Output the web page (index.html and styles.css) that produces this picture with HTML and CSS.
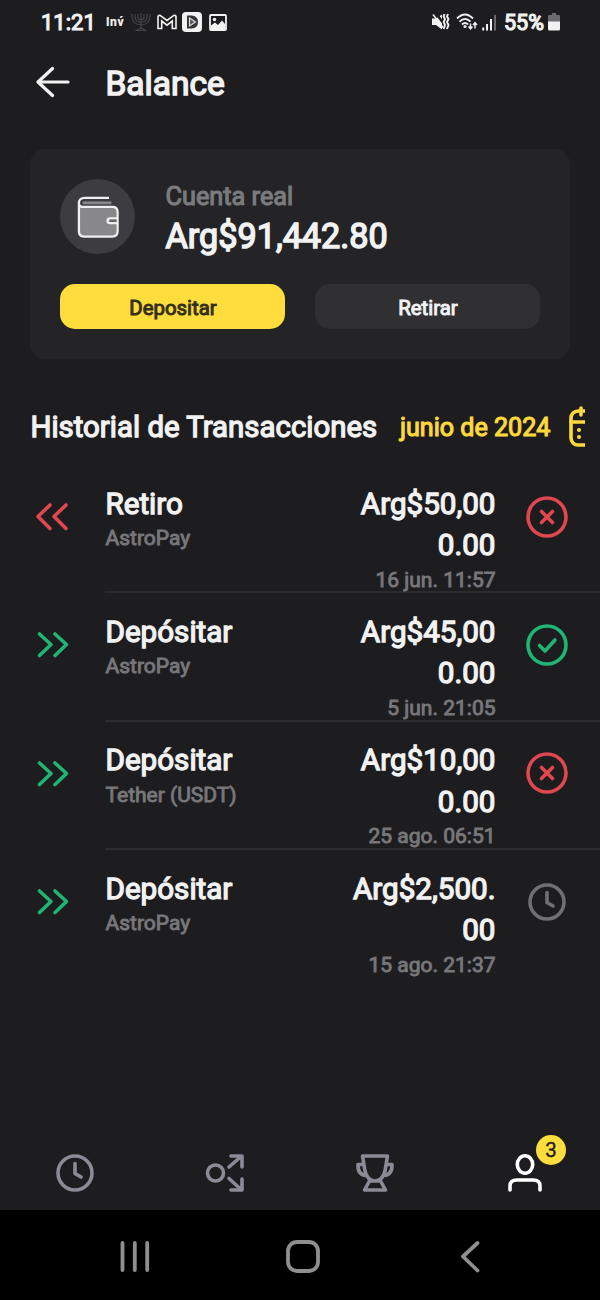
FILE: index.html
```
<!DOCTYPE html>
<html lang="es">
<head>
    <meta charset="UTF-8">
    <meta name="viewport" content="width=device-width, initial-scale=1.0">
    <title>Balance</title>
    <link rel="stylesheet" href="styles.css">
</head>
<body>
    <!-- shared icons -->
    <svg class="sprite">
        <symbol id="in" viewBox="0 0 36 30">
            <path d="M4.5 4 L16 14.5 L4.5 25.5 M20 4 L31.5 14.5 L20 25.5"/>
        </symbol>
        <symbol id="failed" viewBox="0 0 44 44">
            <circle cx="22" cy="22" r="19"/>
            <path d="M16.5 16.5 L27.5 27.5 M27.5 16.5 L16.5 27.5"/>
        </symbol>
        <symbol id="clock" viewBox="0 0 44 44">
            <circle cx="22" cy="22" r="17"/>
            <path d="M22 12.5 V22.5 L28 26"/>
        </symbol>
    </svg>

    <div class="status-bar">
        <span class="time">11:21</span>
        <span class="inv">Inv&#769;</span>
        <svg class="menorah" width="20" height="20" viewBox="0 0 20 20">
            <path d="M10 1 V17 M1 2 V5 A9 8 0 0 0 19 5 V2 M4 2 V5 A6 5.5 0 0 0 16 5 V2 M7 2 V5 A3 3 0 0 0 13 5 V2 M5.500 18.500 H14.500 L10 16 Z"/>
        </svg>
        <svg class="mail" width="20" height="16" viewBox="0 0 20 16">
            <path d="M1 14.500 V2.500 Q1.500 .8 3.500 1.600 L10 6.500 L16.500 1.600 Q18.500 .8 19 2.500 V14.500 H15.300 V7 L10 11.200 L4.700 7 V14.500 Z"/>
        </svg>
        <svg class="play" width="20" height="20" viewBox="0 0 20 20">
            <rect width="20" height="20" rx="4" fill="#f2f2f2"/>
            <path d="M5 3.500 H9.500 Q16 4 16 10 T9.500 16.500 H5 Z" fill="#353537"/>
            <path d="M7.500 6 L13.500 10 L7.500 14 Z" fill="#57575a" stroke="#ddd" stroke-width="1.200"/>
        </svg>
        <svg class="photo" width="18" height="17" viewBox="0 0 18 17">
            <rect x="1" y="1" width="16" height="15" rx="1" fill="none" stroke="#f2f2f2" stroke-width="1.800"/>
            <circle cx="5.500" cy="5.500" r="1.700" fill="#f2f2f2"/>
            <path d="M2 15 V11.500 L6 8.500 L9 11 L13 6.500 L16 10 V15 Z" fill="#f2f2f2"/>
        </svg>
        <div class="status-right">
            <svg width="18" height="18" viewBox="0 0 18 18" fill="none" stroke="#f2f2f2">
                <path d="M0 5.500 H4 L10 1.500 V16.500 L4 12 H0 Z" fill="#f2f2f2" stroke="none"/>
                <path d="M3 -1 L12 11" stroke="#1d1d1f" stroke-width="2.500"/>
                <path d="M1 1.500 L11 14.500" stroke-width="1.500"/>
                <path d="M12.500 1 L11.700 3.500 L13 6 L11.700 9 L13 12 L11.700 16 M16 1 L15 3.500 L16.500 6 L15 9 L16.500 12 L15 16" stroke-width="1.900"/>
            </svg>
            <svg class="wifi" width="22" height="18" viewBox="0 0 22 18" fill="none" stroke="#f2f2f2" stroke-width="1.900">
                <path d="M1 5.500 Q9 -2.500 17 5.500 M3.500 8.700 Q9 3 14.500 8.700 M6 11.500 Q9 8.500 12 11.500"/>
                <circle cx="9" cy="13.500" r="1.500" fill="#f2f2f2" stroke="none"/>
                <path d="M14.500 10.500 V15.500 M12.500 13.500 L14.500 15.800 L16.500 13.500 M19 15.500 V10 M17 12 L19 9.700 L21 12" stroke-width="1.500"/>
            </svg>
            <svg class="signal" width="14" height="17" viewBox="0 0 14 17">
                <path d="M1.200 13.500 V16.500 M5 10 V16.500 M9 5 V16.500" stroke="#f2f2f2" stroke-width="2"/>
                <path d="M13 1 V16.500" stroke="#77777a" stroke-width="1.700"/>
            </svg>
            <span class="percent">55%</span>
            <svg class="battery" width="12" height="18" viewBox="0 0 12 18">
                <path d="M4 0 H8 V2 H11 Q12 2 12 3 V9 H0 V3 Q0 2 1 2 H4 Z" fill="#6b6b6d"/>
                <path d="M0 8.500 H12 V16 Q12 17.500 10.500 17.500 H1.500 Q0 17.500 0 16 Z" fill="#f2f2f2"/>
            </svg>
        </div>
    </div>

    <div class="header">
        <svg class="back" width="34" height="32" viewBox="0 0 34 32">
            <path d="M32 16 H2.500 M16.500 2.500 L2 16 L16.500 29.500"/>
        </svg>
        <h1>Balance</h1>
    </div>

    <div class="card">
        <div class="account">
            <div class="wallet">
                <svg width="42" height="42" viewBox="0 0 44 44">
                    <path d="M4 11 H37 Q41.500 12 41.500 16 V36 Q41.500 42 36.500 42 H7 Q2 42 2 36 V7 Z" fill="#88888a"/>
                    <path d="M4 3 H34 V10 H4 Z" fill="#3c3c41"/>
                    <path d="M6 7.200 H36" stroke="#88888a" stroke-width="3"/>
                    <path d="M33.500 2 H8 Q2 2 2 7.500 V37 Q2 42.500 7 42.500 H37 Q42.500 42.500 42.500 37 V16.500 Q42.500 11.500 37 11.500 H7 Q2 11.500 2 7.500 M42.500 23.500 H34.500 Q32 23.500 32 26 Q32 28.500 34.500 28.500 H42.500" fill="none" stroke="#f0f0f0" stroke-width="2.400"/>
                    <path d="M34.500 26 H41.300" stroke="#68686b" stroke-width="2.600"/>
                </svg>
            </div>
            <div>
                <div class="account-name">Cuenta real</div>
                <div class="account-sum">Arg$91,442.80</div>
            </div>
        </div>
        <div class="buttons">
            <button class="btn btn-primary">Depositar</button>
            <button class="btn">Retirar</button>
        </div>
    </div>

    <div class="history-header">
        <h2>Historial de Transacciones</h2>
        <span class="month">junio de 2024</span>
        <svg class="calendar" width="40" height="44" viewBox="0 0 40 44">
            <rect x="2" y="6" width="34" height="34" rx="7"/>
            <path d="M2 17 H36 M12 3 V10 M26.500 3 V10"/>
            <path d="M10 25 V25.100 M10 32 V32.100 M19 25 V25.100 M19 32 V32.100" stroke-width="4"/>
        </svg>
    </div>

    <div class="list">
        <div class="row">
            <svg class="direction red" width="36" height="30" viewBox="0 0 36 30">
                <path d="M15 3 L3 14.500 L15 26.500 M31 3 L19 14.500 L31 26.500"/>
            </svg>
            <div class="row-body">
                <div class="info">
                    <div class="name">Retiro</div>
                    <div class="method">AstroPay</div>
                </div>
                <div class="amount">
                    <div class="sum">Arg$50,000.00</div>
                    <div class="date">16 jun. 11:57</div>
                </div>
                <svg class="state red"><use href="#failed"/></svg>
            </div>
        </div>
        <div class="row">
            <svg class="direction green"><use href="#in"/></svg>
            <div class="row-body">
                <div class="info">
                    <div class="name">Depósitar</div>
                    <div class="method">AstroPay</div>
                </div>
                <div class="amount">
                    <div class="sum">Arg$45,000.00</div>
                    <div class="date">5 jun. 21:05</div>
                </div>
                <svg class="state green" viewBox="0 0 44 44">
                    <circle cx="22" cy="22" r="19"/>
                    <path d="M14.500 22.500 L20 28 L30 17"/>
                </svg>
            </div>
        </div>
        <div class="row">
            <svg class="direction green"><use href="#in"/></svg>
            <div class="row-body">
                <div class="info">
                    <div class="name">Depósitar</div>
                    <div class="method">Tether (USDT)</div>
                </div>
                <div class="amount">
                    <div class="sum">Arg$10,000.00</div>
                    <div class="date">25 ago. 06:51</div>
                </div>
                <svg class="state red"><use href="#failed"/></svg>
            </div>
        </div>
        <div class="row">
            <svg class="direction green"><use href="#in"/></svg>
            <div class="row-body">
                <div class="info">
                    <div class="name">Depósitar</div>
                    <div class="method">AstroPay</div>
                </div>
                <div class="amount">
                    <div class="sum">Arg$2,500.00</div>
                    <div class="date">15 ago. 21:37</div>
                </div>
                <svg class="state gray"><use href="#clock"/></svg>
            </div>
        </div>
    </div>

    <div class="tabs">
        <div class="tab">
            <svg><use href="#clock"/></svg>
        </div>
        <div class="tab">
            <svg viewBox="0 0 44 44">
                <circle cx="12.500" cy="22" r="8"/>
                <path d="M26 16 L38 5.500 M28 5 H39 V16 M26 27.500 L38 38.500 M28 39 H39 V28"/>
            </svg>
        </div>
        <div class="tab">
            <svg viewBox="0 0 44 44">
                <path d="M9.500 5 H34.500 L32 20 Q29.500 30 22 30 Q14.500 30 12 20 Z M11 13.500 H5 Q4.500 23.500 13 24.500 M33 13.500 H39 Q39.500 23.500 31 24.500 M16.500 30 H27.500 L32.500 39 H11.500 Z"/>
            </svg>
        </div>
        <div class="tab active">
            <svg viewBox="0 0 44 44">
                <ellipse cx="22" cy="13.500" rx="7.700" ry="8.700"/>
                <path d="M7 39 V35 Q7 29 14 29 H30 Q37 29 37 35 V39"/>
            </svg>
            <span class="badge">3</span>
        </div>
    </div>

    <div class="system-nav">
        <svg width="40" height="40" viewBox="0 0 40 40"><path d="M7.500 6 V33 M19.800 6 V33 M32.200 6 V33"/></svg>
        <svg width="40" height="40" viewBox="0 0 40 40"><rect x="5" y="5" width="30" height="29" rx="9"/></svg>
        <svg width="40" height="40" viewBox="0 0 40 40"><path d="M27.500 6 L13 19.500 L27.500 33.500"/></svg>
    </div>
</body>
</html>
```

FILE: styles.css
```
* {
    box-sizing: border-box;
}
body {
    margin: 0;
    width: 600px;
    height: 1300px;
    overflow: hidden;
    display: flex;
    flex-direction: column;
    background-color: #1d1d1f;
    color: #f2f2f2;
    font-family: Roboto, sans-serif;
    -webkit-text-stroke: 0.9px currentColor;
}
svg {
    display: block;
    flex: none;
}
.sprite {
    position: absolute;
    width: 0;
    height: 0;
}

/* phone status bar */
.status-bar {
    height: 44px;
    padding: 0 40px 0 41px;
    display: flex;
    align-items: center;
}
.time {
    width: 65px;
    font-size: 22px;
    -webkit-text-stroke-width: 1.1px;
}
.inv {
    width: 25px;
    font-size: 12px;
    font-weight: 700;
    letter-spacing: 0.6px;
    -webkit-text-stroke-width: 0.2px;
}
.menorah {
    fill: none;
    stroke: #454547;
    stroke-width: 1.2;
}
.mail {
    margin-left: 6px;
    fill: none;
    stroke: #f2f2f2;
    stroke-width: 1.6;
}
.play {
    margin-left: 5px;
}
.photo {
    margin-left: 7px;
}
.status-right {
    margin-left: auto;
    display: flex;
    align-items: center;
}
.wifi {
    margin-left: 6px;
}
.signal {
    margin-left: 4px;
}
.percent {
    margin-left: 8px;
    width: 44px;
    font-size: 21.5px;
    -webkit-text-stroke-width: 1.2px;
}

.header {
    height: 78px;
    padding-left: 35.5px;
    display: flex;
    align-items: center;
}
.back {
    margin-top: -2px;
    fill: none;
    stroke: #f2f2f2;
    stroke-width: 3.2;
    stroke-linecap: round;
    stroke-linejoin: round;
}
h1 {
    margin: 0 0 0 36px;
    font-size: 33.5px;
    font-weight: 400;
    -webkit-text-stroke-width: 1.5px;
}

/* account card */
.card {
    height: 210px;
    margin: 27px 30px 0;
    padding: 30px;
    border-radius: 15px;
    background-color: #242426;
}
.account {
    display: flex;
    height: 75px;
    gap: 30.5px;
}
.wallet {
    width: 75px;
    height: 75px;
    border-radius: 50%;
    background-color: #3c3c41;
    display: flex;
    align-items: center;
    justify-content: center;
}
.account-name {
    color: #7b7b7d;
    font-size: 25.3px;
    line-height: 35px;
    -webkit-text-stroke-width: 1.1px;
}
.account-sum {
    font-size: 34.2px;
    line-height: 45px;
    -webkit-text-stroke-width: 1.5px;
}
.buttons {
    margin-top: 30px;
    display: flex;
    gap: 30px;
}
.btn {
    flex: 1;
    height: 45px;
    padding: 3px 0 0 1px;
    border: none;
    border-radius: 15px;
    background-color: #303032;
    color: #f2f2f2;
    font-family: inherit;
    font-size: 20.4px;
    -webkit-text-stroke: 1px currentColor;
}
.btn-primary {
    background-color: #ffdd3c;
    color: #35301a;
}

/* transactions */
.history-header {
    width: 554.5px;
    height: 44px;
    margin: 46px 0 0 30.5px;
    overflow: hidden;
    display: flex;
    align-items: center;
    white-space: nowrap;
}
h2 {
    margin: 0;
    width: 369.5px;
    flex: none;
    font-size: 29.4px;
    font-weight: 400;
    -webkit-text-stroke-width: 1.3px;
}
.month {
    width: 169px;
    flex: none;
    color: #ffd83c;
    font-size: 25.1px;
    -webkit-text-stroke-width: 1.1px;
}
.calendar {
    fill: none;
    stroke: #ffd83c;
    stroke-width: 3.6;
    stroke-linecap: round;
}
.list {
    margin-top: 16px;
}
.row {
    display: flex;
    height: 128.4px;
    padding-left: 35px;
}
.direction {
    width: 36px;
    height: 30px;
    margin: 37px 34px 0 0;
    fill: none;
    stroke-width: 3.6;
    stroke-linecap: round;
    stroke-linejoin: round;
}
.row-body {
    flex: 1;
    display: flex;
    padding-top: 18.600px;
    border-bottom: 2px solid #2c2c2e;
}
.row:last-child .row-body {
    border-bottom: none;
}
.info {
    width: 242.500px;
    padding-left: 0.5px;
}
.name,
.sum {
    font-size: 29.6px;
    line-height: 41.5px;
    -webkit-text-stroke-width: 1.3px;
}
.method,
.date {
    color: #77777a;
    font-size: 21px;
    line-height: 26px;
}
.amount {
    width: 148px;
    text-align: right;
}
.sum {
    word-break: break-all;
}
.date {
    white-space: nowrap;
}
.state {
    width: 44px;
    height: 44px;
    margin: 11px 0 0 29.5px;
    fill: none;
    stroke-width: 3.6;
    stroke-linecap: round;
    stroke-linejoin: round;
}
.red {
    stroke: #e0474f;
}
.green {
    stroke: #1fb574;
}
.gray {
    stroke: #707072;
}

/* bottom tabs */
.tabs {
    height: 75px;
    margin-top: auto;
    display: flex;
}
.tab {
    position: relative;
    width: 150px;
    display: flex;
    align-items: center;
    justify-content: center;
}
.tab svg {
    width: 44px;
    height: 44px;
    fill: none;
    stroke: #8b8a96;
    stroke-width: 3.6;
    stroke-linecap: round;
    stroke-linejoin: round;
}
.tab.active svg {
    stroke: #fff;
}
.badge {
    position: absolute;
    top: 0;
    left: 86px;
    width: 30px;
    height: 30px;
    border-radius: 50%;
    background-color: #ffdd3c;
    color: #1d1d1f;
    font-size: 20.5px;
    line-height: 31px;
    text-align: center;
    -webkit-text-stroke: 0.4px currentColor;
}

.system-nav {
    height: 90px;
    padding: 4px 110px 0 115px;
    background-color: #000;
    display: flex;
    align-items: center;
    justify-content: space-between;
}
.system-nav svg {
    fill: none;
    stroke: #8f8f8f;
    stroke-width: 3.8;
    stroke-linecap: round;
    stroke-linejoin: round;
}
```
